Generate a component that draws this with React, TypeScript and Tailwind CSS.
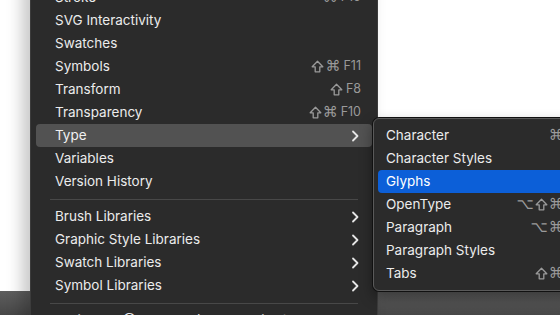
import React from 'react';

type Item = { label: string; shortcut?: React.ReactNode; sub?: boolean; active?: boolean; check?: boolean };

const Chevron = () => (
  <svg width="8" height="12" viewBox="0 0 8 12" className="mr-[2px] text-[#e6e6e6]">
    <path d="M2 1.5 L6.5 6 L2 10.5" fill="none" stroke="currentColor" strokeWidth="1.8" strokeLinecap="round" strokeLinejoin="round" />
  </svg>
);

const Shift = () => (
  <svg width="13" height="13" viewBox="0 0 13 13" className="mr-[1px]">
    <path d="M6.5 1.2 L11.8 6.8 H8.8 V11.8 H4.2 V6.8 H1.2 Z" fill="none" stroke="currentColor" strokeWidth="1.3" strokeLinejoin="round" />
  </svg>
);

const Keys: React.FC<{ keys: string; key2?: string }> = ({ keys, key2 }) => (
  <span className="flex items-center gap-[2px] text-[#9a9a9a]">
    <span className="flex items-center font-['DejaVu_Sans',sans-serif] text-[15px] tracking-[1px]">
      {keys.split('').map((k, i) => (k === '⇧' ? <Shift key={i} /> : <span key={i}>{k}</span>))}
    </span>
    {key2 && <span className="text-[12.5px]">{key2}</span>}
  </span>
);

const mainTop: Item[] = [
  { label: 'Stroke', shortcut: <Keys keys="⌘" key2="F10" /> },
  { label: 'SVG Interactivity' },
  { label: 'Swatches' },
  { label: 'Symbols', shortcut: <Keys keys="⇧⌘" key2="F11" /> },
  { label: 'Transform', shortcut: <Keys keys="⇧" key2="F8" /> },
  { label: 'Transparency', shortcut: <Keys keys="⇧⌘" key2="F10" /> },
  { label: 'Type', sub: true, active: true },
  { label: 'Variables' },
  { label: 'Version History' },
];

const mainLibs: Item[] = [
  { label: 'Brush Libraries', sub: true },
  { label: 'Graphic Style Libraries', sub: true },
  { label: 'Swatch Libraries', sub: true },
  { label: 'Symbol Libraries', sub: true },
];

const typeItems: Item[] = [
  { label: 'Character', shortcut: <Keys keys="⌘T" /> },
  { label: 'Character Styles' },
  { label: 'Glyphs', active: true },
  { label: 'OpenType', shortcut: <Keys keys="⌥⇧⌘T" /> },
  { label: 'Paragraph', shortcut: <Keys keys="⌥⌘T" /> },
  { label: 'Paragraph Styles' },
  { label: 'Tabs', shortcut: <Keys keys="⇧⌘T" /> },
];

const Row: React.FC<{ item: Item; pad: string; blue?: boolean }> = ({ item, pad, blue }) => (
  <div
    className={`flex h-[23px] items-center justify-between rounded-[4px] ${pad} pr-[11px] ${
      item.active ? (blue ? 'bg-[#0c5fd8] text-white' : 'bg-[#525252] text-[#f0f0f0]') : 'text-[#ececec]'
    }`}
  >
    <span className="flex items-center">
      {item.check && <span className="-ml-[13px] w-[13px] text-[12px]">✓</span>}
      {item.label}
    </span>
    {item.sub ? <Chevron /> : item.shortcut}
  </div>
);

const Separator = () => (
  <div className="flex h-[12px] items-center px-[14px]">
    <div className="h-px w-full bg-[#484848]" />
  </div>
);

export default function App() {
  return (
    <div className="relative flex h-[315px] w-[560px] flex-col overflow-hidden bg-white font-['Inter',sans-serif] text-[13.5px]">
      <div className="flex-1 bg-white" />
      <div className="h-[24px] bg-gradient-to-b from-[#5e5e5e] to-[#474747]" />

      <div className="absolute left-[30px] top-[-20px] w-[348px] rounded-[6px] border border-[#3c3c3c] bg-[#2b2b2b] px-[5px] pt-[5px] shadow-[-8px_0_16px_rgba(0,0,0,0.22)]">
        {mainTop.map((it) => (
          <Row key={it.label} item={it} pad="pl-[19px]" />
        ))}
        <Separator />
        {mainLibs.map((it) => (
          <Row key={it.label} item={it} pad="pl-[19px]" />
        ))}
        <Separator />
        <Row item={{ label: 'Untitled-3 @ 67.98 % (RGB/Preview)', check: true }} pad="pl-[19px]" />
      </div>

      <div className="absolute left-[373px] top-[118px] w-[218px] rounded-[6px] border border-[#5a5a5a] bg-[#2b2b2b] px-[4px] py-[5px] shadow-[0_0_0_1px_#111,0_6px_14px_rgba(0,0,0,0.4)]">
        {typeItems.map((it) => (
          <Row key={it.label} item={it} pad="pl-[8px]" blue />
        ))}
      </div>
    </div>
  );
}
